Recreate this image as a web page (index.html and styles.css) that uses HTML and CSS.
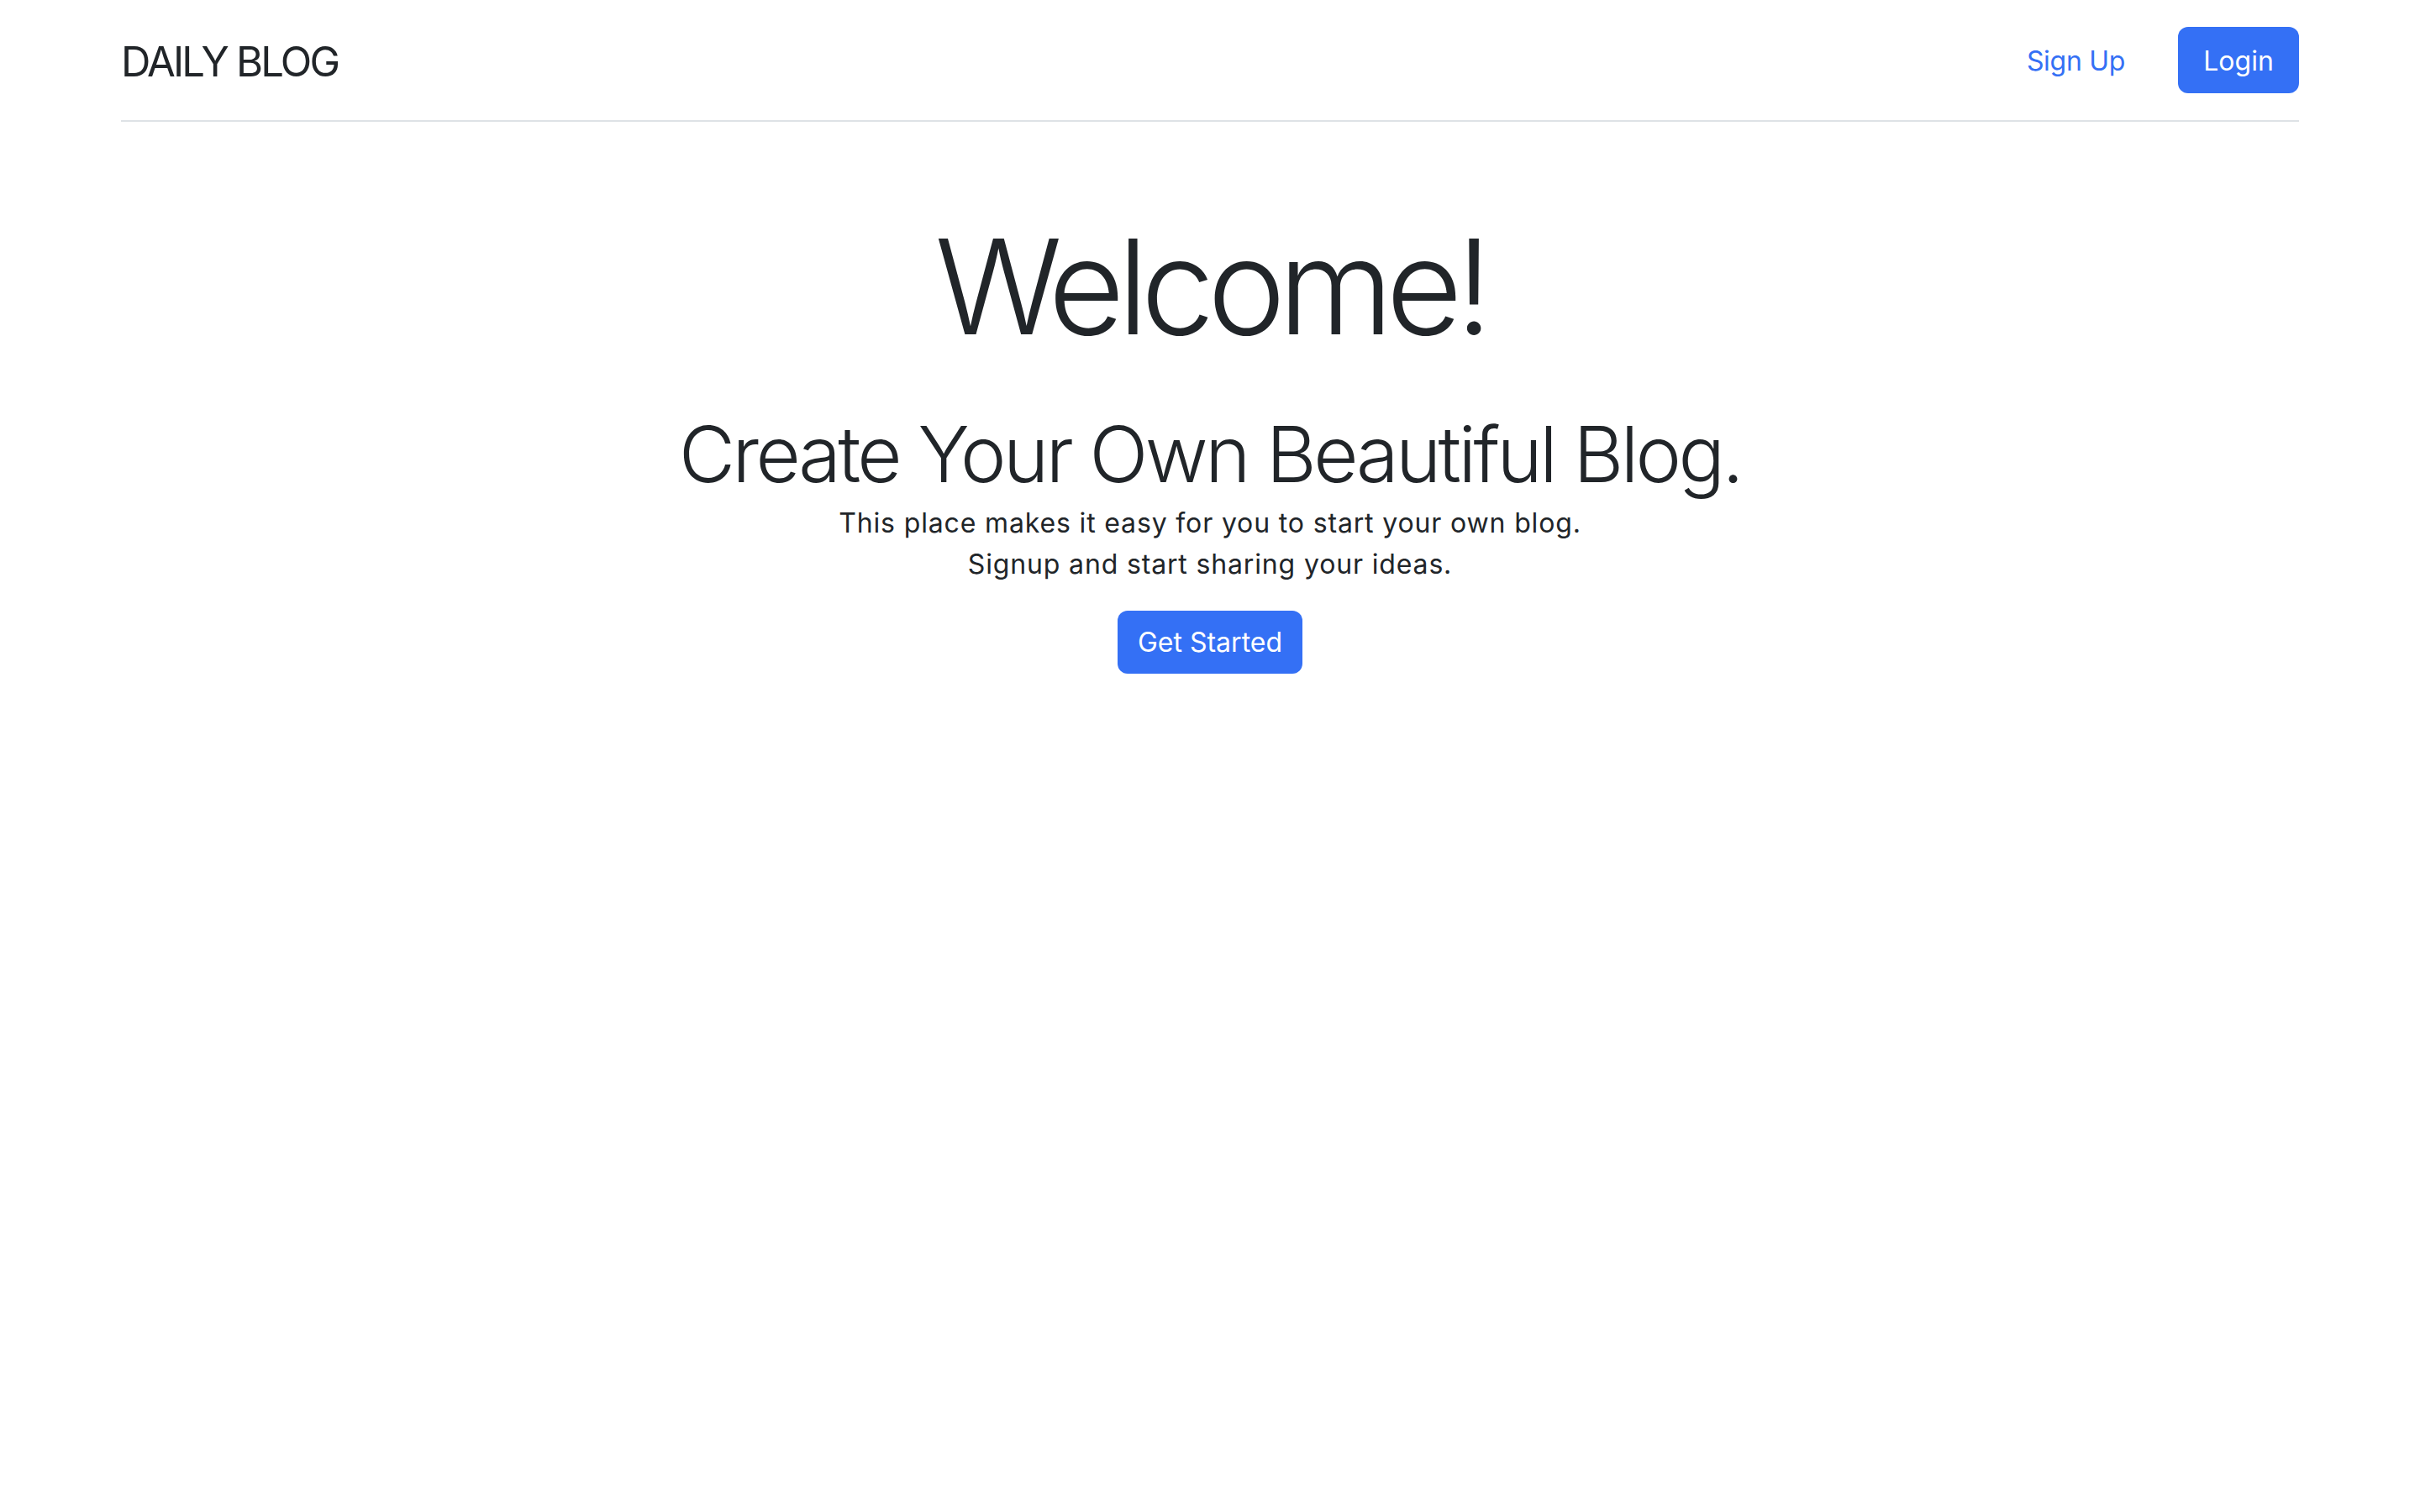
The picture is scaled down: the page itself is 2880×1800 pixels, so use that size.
FILE: index.html
```html
<!DOCTYPE html>
<html lang="en">
<head>
<meta charset="utf-8">
<title>Daily Blog</title>
<link rel="stylesheet" href="styles.css">
</head>
<body>
<div class="container">
  <header class="site-header">
    <a class="brand" href="#">DAILY BLOG</a>
    <nav class="nav">
      <a class="nav-link" href="#">Sign Up</a>
      <a class="btn btn-login" href="#">Login</a>
    </nav>
  </header>
  <main class="hero">
    <h1 class="hero-title">Welcome!</h1>
    <h2 class="hero-subtitle">Create Your Own Beautiful Blog.</h2>
    <p class="hero-text">This place makes it easy for you to start your own blog.<br>Signup and start sharing your ideas.</p>
    <a class="btn btn-start" href="#">Get Started</a>
  </main>
</div>
</body>
</html>
```

FILE: styles.css
```css
html, body {
  margin: 0;
  padding: 0;
  background: #ffffff;
}

body {
  font-family: Inter, "Noto Sans", "Liberation Sans", sans-serif;
  color: #212529;
}

.container {
  max-width: 2592px;
  margin: 0 auto;
  padding: 0 24px;
}

.site-header {
  display: flex;
  align-items: center;
  justify-content: space-between;
  padding: 32px 0;
  border-bottom: 2px solid #dee2e6;
}

.brand {
  font-size: 49px;
  font-weight: 400;
  color: #212529;
  text-decoration: none;
  letter-spacing: -2.8px;
  padding-top: 3px;
}

.nav {
  display: flex;
  align-items: center;
  gap: 47px;
}

.nav-link {
  font-size: 32px;
  color: #3470f5;
  text-decoration: none;
  padding: 2px 16px 0;
  letter-spacing: -0.3px;
}

.btn {
  display: inline-flex;
  align-items: center;
  justify-content: center;
  background: #3470f5;
  color: #ffffff;
  text-decoration: none;
  font-size: 32px;
  border-radius: 12px;
  box-sizing: border-box;
}

.btn-login {
  width: 144px;
  height: 79px;
  padding-top: 2px;
}

.hero {
  display: flex;
  flex-direction: column;
  align-items: center;
  text-align: center;
  padding-top: 102px;
}

.hero-title {
  margin: 0;
  font-size: 157px;
  font-weight: 300;
  line-height: 1.2;
  letter-spacing: -8.7px;
}

.hero-subtitle {
  margin: 51px 0 0;
  font-size: 92px;
  font-weight: 300;
  line-height: 1.2;
  letter-spacing: -3.55px;
}

.hero-text {
  margin: 1px 0 0;
  font-size: 32px;
  line-height: 49px;
  letter-spacing: 0.85px;
}

.btn-start {
  margin-top: 31px;
  width: 220px;
  height: 75px;
  padding-top: 1px;
}
```
